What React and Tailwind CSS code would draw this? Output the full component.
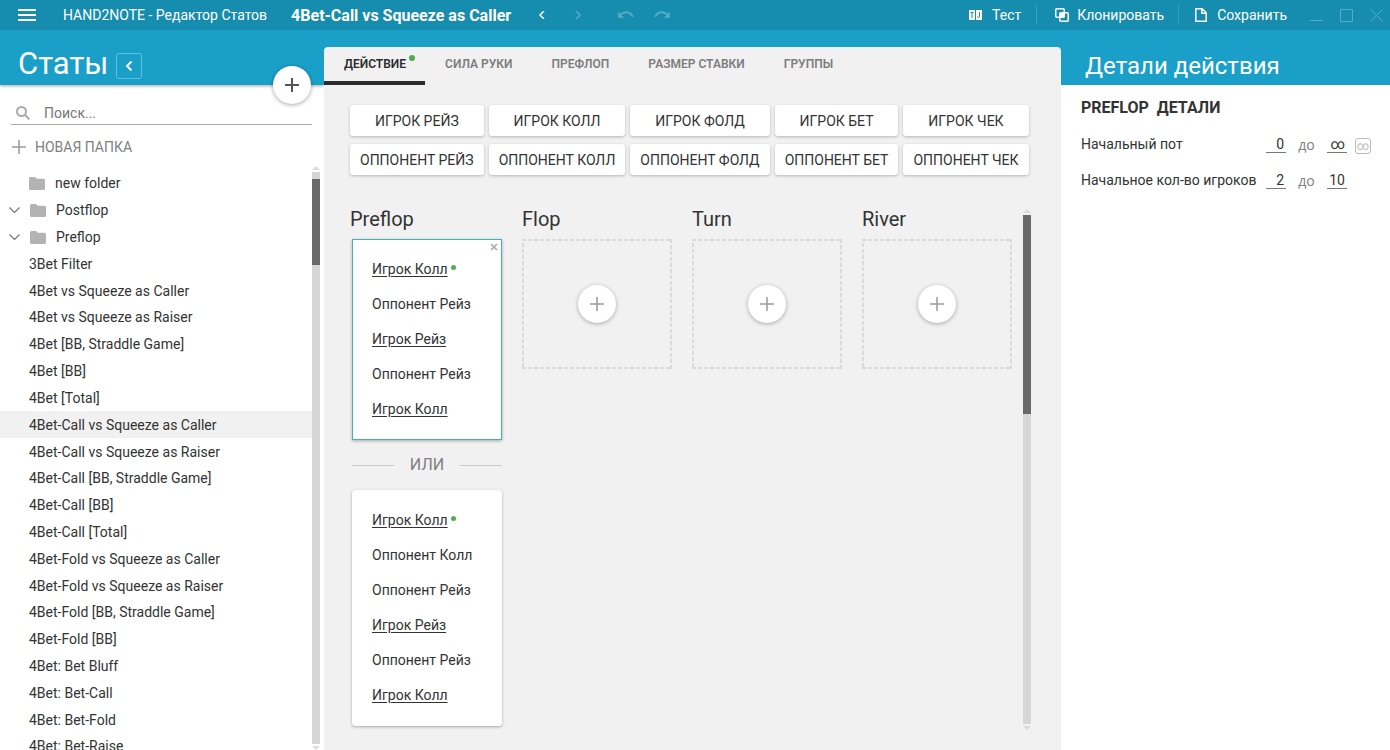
import React, { useState } from "react";

const STATS = [
  "3Bet Filter",
  "4Bet vs Squeeze as Caller",
  "4Bet vs Squeeze as Raiser",
  "4Bet [BB, Straddle Game]",
  "4Bet [BB]",
  "4Bet [Total]",
  "4Bet-Call vs Squeeze as Caller",
  "4Bet-Call vs Squeeze as Raiser",
  "4Bet-Call [BB, Straddle Game]",
  "4Bet-Call [BB]",
  "4Bet-Call [Total]",
  "4Bet-Fold vs Squeeze as Caller",
  "4Bet-Fold vs Squeeze as Raiser",
  "4Bet-Fold [BB, Straddle Game]",
  "4Bet-Fold [BB]",
  "4Bet: Bet Bluff",
  "4Bet: Bet-Call",
  "4Bet: Bet-Fold",
  "4Bet: Bet-Raise",
];

const TABS = ["ДЕЙСТВИЕ", "СИЛА РУКИ", "ПРЕФЛОП", "РАЗМЕР СТАВКИ", "ГРУППЫ"];

const ACTIONS = [
  "ИГРОК РЕЙЗ",
  "ИГРОК КОЛЛ",
  "ИГРОК ФОЛД",
  "ИГРОК БЕТ",
  "ИГРОК ЧЕК",
  "ОППОНЕНТ РЕЙЗ",
  "ОППОНЕНТ КОЛЛ",
  "ОППОНЕНТ ФОЛД",
  "ОППОНЕНТ БЕТ",
  "ОППОНЕНТ ЧЕК",
];

const LINES = [
  ["Игрок Колл", "Оппонент Рейз", "Игрок Рейз", "Оппонент Рейз", "Игрок Колл"],
  [
    "Игрок Колл",
    "Оппонент Колл",
    "Оппонент Рейз",
    "Игрок Рейз",
    "Оппонент Рейз",
    "Игрок Колл",
  ],
];

/* ───────────────── Icons ───────────────── */
function Icon({ d, className, width = 2, box = "0 0 24 24" }) {
  return (
    <svg
      className={className}
      viewBox={box}
      fill="none"
      stroke="currentColor"
      strokeWidth={width}
      aria-hidden="true"
    >
      <path d={d} />
    </svg>
  );
}

function FolderIcon() {
  return (
    <svg className="w-4 h-[13px] text-[#b3b3b3]" viewBox="0 0 16 13" fill="currentColor" aria-hidden="true">
      <path d="M1.5 0h4.6l1.6 1.7h6.8A1.5 1.5 0 0 1 16 3.2v8.3a1.5 1.5 0 0 1-1.5 1.5h-13A1.5 1.5 0 0 1 0 11.5v-10A1.5 1.5 0 0 1 1.5 0z" />
    </svg>
  );
}

function UndoIcon({ className }) {
  return (
    <svg className={className} viewBox="0 0 16 8" fill="currentColor" aria-hidden="true">
      <path d="M0 .5 2.3 2.7C3.9 1.2 6 .3 8.3.3c3.5 0 6.4 2.2 7.5 5.3l-1.8.6C13.2 3.9 11 2.2 8.3 2.2c-1.8 0-3.4.7-4.6 1.8L6.3 6.7H0z" />
    </svg>
  );
}

function ScrollArrow({ down }) {
  return (
    <svg className="w-2 h-1 text-[#dcdcdc]" viewBox="0 0 8 4" fill="currentColor" aria-hidden="true">
      <path d={down ? "M0 0h8L4 4z" : "M0 4h8L4 0z"} />
    </svg>
  );
}

/* ───────────────── Top bar ───────────────── */
function TopBar() {
  return (
    <header className="h-[30px] shrink-0 flex items-center bg-[#168cae] text-white text-sm">
      <button type="button" aria-label="Меню" className="ml-[18px] w-[18px]">
        <Icon className="w-[18px] h-3" box="0 0 18 12" d="M0 1h18M0 6h18M0 11h18" />
      </button>
      <span className="ml-[27px] whitespace-nowrap">HAND2NOTE - Редактор Статов</span>
      <h1 className="ml-6 pt-0.5 text-base font-bold whitespace-nowrap">
        4Bet-Call vs Squeeze as Caller
      </h1>
      <button type="button" aria-label="Назад" className="ml-[27px]">
        <Icon className="w-2 h-2" box="0 0 8 8" width={1.5} d="M6 0 2 4l4 4" />
      </button>
      <button type="button" aria-label="Вперёд" className="ml-7 text-[#52abc6]">
        <Icon className="w-2 h-2" box="0 0 8 8" width={1.5} d="M2 0l4 4-4 4" />
      </button>
      <button type="button" aria-label="Отменить" className="ml-9 text-[#52abc6]">
        <UndoIcon className="w-4 h-2" />
      </button>
      <button type="button" aria-label="Повторить" className="ml-5 text-[#52abc6]">
        <UndoIcon className="w-4 h-2 -scale-x-100" />
      </button>

      <div className="ml-auto flex items-center">
        <button type="button" className="flex items-center gap-2.5 px-[15px]">
          <svg className="w-[13px] h-[10px]" viewBox="0 0 13 10" aria-hidden="true">
            <path fill="#fff" d="M0 0h6v10H0zM7 0h6v10H7z" />
            <path fill="none" stroke="#168cae" d="M1.5 2.5h3M3 2.5V8M10.5 2v4.5q0 1-1 1T8.5 6.5" />
          </svg>
          Тест
        </button>
        <span className="w-px h-5 bg-[#3b9ebc]" />
        <button type="button" className="flex items-center gap-2 pl-[18px] pr-[14px]">
          <svg className="w-[14px] h-[14px]" viewBox="0 0 14 14" fill="none" stroke="#fff" strokeWidth="1.5" aria-hidden="true">
            <rect x=".75" y=".75" width="8.5" height="8.5" rx="1" />
            <rect x="4.75" y="4.75" width="8.5" height="8.5" rx="1" />
            <path fill="#fff" stroke="none" d="M5 5h4.5v4.5H5z" />
          </svg>
          Клонировать
        </button>
        <span className="w-px h-5 bg-[#3b9ebc]" />
        <button type="button" className="flex items-center gap-2.5 pl-4 pr-[23px]">
          <Icon className="w-3 h-[14px]" box="0 0 12 14" width={1.5} d="M.8.8h6.4l4 4v8.4H.8zM6.8 1v4.2h4.2" />
          Сохранить
        </button>
        <div className="flex items-center gap-[17px] pr-[7px] text-[#55aec8]">
          <button type="button" aria-label="Свернуть">
            <Icon className="w-[13px] h-[13px]" box="0 0 13 13" width={1} d="M0 11.5h13" />
          </button>
          <button type="button" aria-label="Развернуть">
            <Icon className="w-[13px] h-[13px]" box="0 0 13 13" width={1} d="M.5.5h12v12H.5z" />
          </button>
          <button type="button" aria-label="Закрыть">
            <Icon className="w-[13px] h-[13px]" box="0 0 13 13" width={1} d="M.5.5l12 12M12.5.5l-12 12" />
          </button>
        </div>
      </div>
    </header>
  );
}

/* ───────────────── Left: stats list ───────────────── */
function FolderRow({ label, open }) {
  return (
    <li className="flex-1 flex items-center">
      <button type="button" className="flex items-center text-left">
        {open ? (
          <Icon className="w-[11px] h-[6px] ml-[9px] mr-2.5 text-[#777]" box="0 0 11 6" width={1.2} d="M.5.5l5 5 5-5" />
        ) : (
          <span className="w-[29px]" />
        )}
        <FolderIcon />
        <span className="ml-2.5">{label}</span>
      </button>
    </li>
  );
}

function Sidebar({ selected, onSelect }) {
  return (
    <aside className="w-[324px] shrink-0 flex flex-col overflow-hidden bg-white">
      <div className="relative h-[55px] shrink-0 bg-[#1a9fc9] shadow-[0_1px_3px_rgba(0,0,0,0.35)]">
        <div className="flex items-center gap-2 pl-[18px] pt-3 text-white">
          <h2 className="text-[31px] leading-[44px]">Статы</h2>
          <button
            type="button"
            aria-label="Свернуть панель"
            className="w-[26px] h-[26px] mt-1 flex items-center justify-center rounded-[3px] border border-[#5fc0dc]"
          >
            <Icon className="w-2 h-[10px]" box="0 0 8 10" d="M6.5.5 2 5l4.5 4.5" />
          </button>
        </div>
        <button
          type="button"
          aria-label="Добавить"
          className="absolute right-[13px] -bottom-[19px] w-[38px] h-[38px] flex items-center justify-center rounded-full bg-white text-[#555] shadow-[0_1px_4px_rgba(0,0,0,0.35)]"
        >
          <Icon className="w-[14px] h-[14px]" box="0 0 14 14" d="M7 0v14M0 7h14" />
        </button>
      </div>

      <label className="mt-4 ml-[11px] mr-3 h-6 shrink-0 flex items-center gap-3.5 pl-[5px] border-b border-[#aaa]">
        <Icon className="w-[14px] h-[14px] text-[#aaa]" box="0 0 14 14" d="M5.5 1a4.5 4.5 0 1 0 0 9 4.5 4.5 0 0 0 0-9zM8.8 8.8l4.5 4.5" />
        <input
          type="text"
          aria-label="Поиск"
          placeholder="Поиск..."
          className="flex-1 min-w-0 outline-none placeholder:text-[#777]"
        />
      </label>

      <button type="button" className="mt-3 ml-3 h-5 shrink-0 flex items-center gap-[9px] text-[#808080]">
        <Icon className="w-[14px] h-[14px] text-[#999]" box="0 0 14 14" width={1.5} d="M7 0v14M0 7h14" />
        НОВАЯ ПАПКА
      </button>

      <div className="flex-1 min-h-0 flex mt-2">
        <ul className="flex-1 flex flex-col pt-[5px] -mb-[10px]">
          <FolderRow label="new folder" />
          <FolderRow label="Postflop" open />
          <FolderRow label="Preflop" open />
          {STATS.map((name) => (
            <li key={name} className="flex-1 flex">
              <button
                type="button"
                onClick={() => onSelect(name)}
                className={`w-full pl-[29px] text-left leading-5 ${
                  name === selected ? "bg-[#f1f1f1]" : "bg-white"
                }`}
              >
                {name}
              </button>
            </li>
          ))}
        </ul>
        <div className="w-2 mr-1 flex flex-col gap-0.5 pt-px">
          <ScrollArrow />
          <div className="flex-1 bg-[#d6d6d6] pt-[7px]">
            <div className="h-[86px] bg-[#696969]" />
          </div>
          <ScrollArrow down />
        </div>
      </div>
    </aside>
  );
}

/* ───────────────── Center: action editor ───────────────── */
function LineCard({ items, active }) {
  return (
    <div
      className={`relative flex flex-col ml-0.5 px-[19px] pt-[11px] pb-[13px] border bg-white shadow-[0_1px_3px_rgba(0,0,0,0.3)] ${
        active ? "border-[#45b0b8]" : "border-white rounded-[3px]"
      }`}
    >
      {active && (
        <button type="button" aria-label="Удалить" className="absolute top-[3px] right-[3px]">
          <Icon className="w-2 h-2 text-[#aaa]" box="0 0 8 8" width={1.6} d="M1 1l6 6M7 1 1 7" />
        </button>
      )}
      {items.map((item, i) => (
        <button
          key={i}
          type="button"
          className="h-[35px] flex items-center gap-[3px] text-left whitespace-nowrap"
        >
          <span className={item.startsWith("Игрок") ? "underline underline-offset-2" : ""}>
            {item}
          </span>
          {i === 0 && <span className="w-[5px] h-[5px] mb-[3px] rounded-full bg-[#4caf50]" />}
        </button>
      ))}
    </div>
  );
}

function EmptySlot() {
  return (
    <div className="relative h-[130px] flex items-center justify-center">
      <svg className="absolute inset-0 w-full h-full text-[#dadada]" aria-hidden="true">
        <rect
          width="100%"
          height="100%"
          fill="none"
          stroke="currentColor"
          strokeWidth="4"
          strokeDasharray="4 2"
        />
      </svg>
      <button
        type="button"
        aria-label="Добавить действие"
        className="relative w-[38px] h-[38px] flex items-center justify-center rounded-full bg-white text-[#999] shadow-[0_1px_4px_rgba(0,0,0,0.3)]"
      >
        <Icon className="w-[14px] h-[14px]" box="0 0 14 14" width={1.5} d="M7 0v14M0 7h14" />
      </button>
    </div>
  );
}

function Editor() {
  const [tab, setTab] = useState(TABS[0]);

  return (
    <main className="flex-1 min-w-0 mt-[17px] flex flex-col rounded-t bg-[#f1f1f1]">
      <nav className="flex h-[38px] shrink-0 text-xs font-semibold">
        {TABS.map((t) => (
          <button
            key={t}
            type="button"
            onClick={() => setTab(t)}
            className={`relative pl-5 pr-[19px] border-b-4 whitespace-nowrap ${
              t === tab
                ? "border-[#2c2c2c] text-[#2c2c2c]"
                : "border-transparent text-[#7d7d7d]"
            }`}
          >
            {t}
            {t === TABS[0] && (
              <span className="absolute top-2 right-2.5 w-1.5 h-1.5 rounded-full bg-[#4caf50]" />
            )}
          </button>
        ))}
      </nav>

      <div className="grid grid-cols-[repeat(5,auto)] w-max gap-x-[5px] gap-y-2 ml-[26px] mt-5">
        {ACTIONS.map((a) => (
          <button
            key={a}
            type="button"
            className="h-[31px] px-2.5 rounded-[3px] bg-white whitespace-nowrap shadow-[0_1px_3px_rgba(0,0,0,0.25)]"
          >
            {a}
          </button>
        ))}
      </div>

      <div className="flex-1 min-h-0 flex justify-between mt-[31px] ml-[26px] mr-[30px]">
        <div className="flex gap-5">
          <section className="w-[152px]">
            <h3 className="h-[33px] text-xl leading-[26px]">Preflop</h3>
            <LineCard items={LINES[0]} active />
            <div className="h-[50px] ml-0.5 flex items-center gap-4 text-base text-[#808080]">
              <span className="flex-1 h-px bg-[#c8c8c8]" />
              ИЛИ
              <span className="flex-1 h-px bg-[#c8c8c8]" />
            </div>
            <LineCard items={LINES[1]} />
          </section>
          {["Flop", "Turn", "River"].map((street) => (
            <section key={street} className="w-[150px]">
              <h3 className="h-[33px] text-xl leading-[26px]">{street}</h3>
              <EmptySlot />
            </section>
          ))}
        </div>
        <div className="w-2 flex flex-col gap-0.5 pt-[3px] pb-5">
          <ScrollArrow />
          <div className="flex-1 bg-[#d6d6d6]">
            <div className="h-[199px] bg-[#696969]" />
          </div>
          <ScrollArrow down />
        </div>
      </div>
    </main>
  );
}

/* ───────────────── Right: details ───────────────── */
function RangeRow({ label, from, to, children }) {
  return (
    <div className="h-9 flex items-center">
      <span className="w-[185px] whitespace-nowrap">{label}</span>
      <input
        type="text"
        aria-label={`${label} от`}
        defaultValue={from}
        className="w-5 h-[18px] pr-0.5 text-right border-b border-[#777] outline-none"
      />
      <span className="w-[41px] pt-0.5 text-center leading-5 text-[#808080] font-['Open_Sans',sans-serif]">
        до
      </span>
      <input
        type="text"
        aria-label={`${label} до`}
        defaultValue={to}
        className="w-5 h-[18px] pr-0.5 text-right border-b border-[#777] outline-none"
      />
      {children}
    </div>
  );
}

function Details() {
  return (
    <aside className="w-[329px] shrink-0 flex flex-col bg-white">
      <h2 className="h-[55px] shrink-0 pl-6 pt-4 bg-[#1a9fc9] text-white text-2xl leading-10">
        Детали действия
      </h2>
      <div className="pl-5 pt-[13px]">
        <h3 className="mb-2 text-base leading-5 font-bold whitespace-pre">PREFLOP  ДЕТАЛИ</h3>
        <RangeRow label="Начальный пот" from="0" to="∞">
          <button
            type="button"
            aria-label="Без ограничения"
            className="ml-2 mt-1 w-4 h-4 flex items-center justify-center rounded-[3px] border border-[#bbb] text-xs leading-none text-[#bbb]"
          >
            ∞
          </button>
        </RangeRow>
        <RangeRow label="Начальное кол-во игроков" from="2" to="10" />
      </div>
    </aside>
  );
}

export default function App() {
  const [selected, setSelected] = useState("4Bet-Call vs Squeeze as Caller");

  return (
    <div className="h-screen flex flex-col overflow-hidden bg-[#1a9fc9] text-sm text-[#333] font-[Roboto,sans-serif]">
      <TopBar />
      <div className="flex-1 min-h-0 flex">
        <Sidebar selected={selected} onSelect={setSelected} />
        <Editor />
        <Details />
      </div>
    </div>
  );
}
